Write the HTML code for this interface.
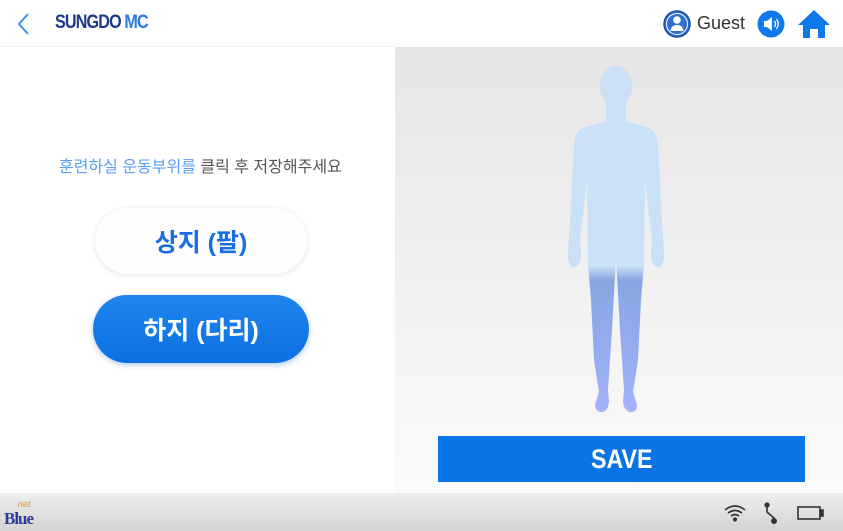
<!DOCTYPE html>
<html><head><meta charset="utf-8"><style>
*{margin:0;padding:0;box-sizing:border-box}
body{width:843px;height:531px;overflow:hidden;background:#fff;position:relative;font-family:"Liberation Sans","Noto Sans CJK KR",sans-serif}
.abs{position:absolute}
.right{left:395px;top:47px;width:448px;height:446px;background:linear-gradient(#e5e5e5,#fbfbfb)}
.bottom{left:0;top:493px;width:843px;height:38px;background:linear-gradient(#eeeeee,#d4d4d4)}
.btn{border-radius:34px;display:flex;align-items:center;justify-content:center;font-weight:bold;font-size:25px}
</style></head><body>
<svg class="abs" style="left:14px;top:12px" width="18" height="24"><path d="M14 2 L5 12 L14 22" stroke="#3d8fe8" stroke-width="2" fill="none"/></svg>
<div class="abs" style="left:55px;top:12px;font-size:19px;font-weight:bold;color:#1d3a8a;letter-spacing:-1px;transform:scaleX(.85);transform-origin:left">SUNGDO <span style="color:#2a7ae0">MC</span></div>
<svg class="abs" style="left:662px;top:9px" width="30" height="30"><circle cx="15" cy="15" r="13" fill="#2f6fd0" stroke="#1c4fa8" stroke-width="1.5"/><circle cx="15" cy="15" r="10.5" fill="none" stroke="#fff" stroke-width="1"/><circle cx="15" cy="11" r="3.8" fill="#fff"/><path d="M8.5 22 Q9 16 15 16 Q21 16 21.5 22Z" fill="#fff"/></svg>
<div class="abs" style="left:697px;top:13px;font-size:18px;color:#333">Guest</div>
<svg class="abs" style="left:756px;top:9px" width="30" height="30"><circle cx="15" cy="15" r="13.5" fill="#0d7ae8"/><path d="M8 12 h3 l5-4 v14 l-5-4 h-3z" fill="#fff"/><path d="M18.5 12 q2 3 0 6 M20.5 10 q3.5 5 0 10" stroke="#fff" stroke-width="1.3" fill="none"/></svg>
<svg class="abs" style="left:797px;top:8px" width="34" height="32"><path d="M17 2 L33 17 H28 V30 H21 V21 H13 V30 H6 V17 H1Z" fill="#0d7ae8"/></svg>
<div class="abs" style="left:0;top:46px;width:395px;height:1px;background:#f3f3f3"></div>
<div class="abs right"></div>
<div class="abs" style="left:59px;top:153px;font-size:16px;color:#555"><span style="color:#5b9ef0">훈련하실 운동부위를</span> 클릭 후 저장해주세요</div>
<div class="abs btn" style="left:95px;top:208px;width:212px;height:66px;background:#fdfdfd;color:#1a6fe0;box-shadow:0 1px 6px rgba(0,0,0,.12)">상지 (팔)</div>
<div class="abs btn" style="left:93px;top:295px;width:216px;height:68px;background:linear-gradient(#1f85ee,#0c6fe0);color:#fff;box-shadow:0 2px 6px rgba(0,80,200,.3)">하지 (다리)</div>
<svg class="abs" style="left:0;top:0" width="843" height="531">
<defs><linearGradient id="g" gradientUnits="userSpaceOnUse" x1="0" y1="60" x2="0" y2="415"><stop offset="0" stop-color="#c9e0f7"/><stop offset="0.58" stop-color="#c9e0f7"/><stop offset="0.62" stop-color="#87a6e3"/><stop offset="1" stop-color="#a4b2fc"/></linearGradient></defs>
<ellipse cx="616" cy="86" rx="16" ry="20" fill="url(#g)"/>
<path d="M606 100 L606 121 L583 128 Q575 132 574 145 L571 200 L568 255 Q568 266 574 267 Q581 267 581 255 L580 240 L587 180 L588 265 L591 300 L594 360 L599 392 L595 405 Q596 413 603 412 Q609 410 609 400 L608 390 L612 330 L616 258 L620 330 L624 390 L623 400 Q623 410 630 412 Q637 413 637 405 L633 392 L638 360 L641 300 L644 265 L645 180 L652 240 L651 255 Q651 267 658 267 Q664 266 664 255 L661 200 L658 145 Q657 132 649 128 L626 121 L626 100Z" fill="url(#g)"/>
</svg>
<div class="abs" style="left:438px;top:436px;width:367px;height:46px;background:#0a74e6;display:flex;align-items:center;justify-content:center"><span style="color:#fff;font-weight:bold;font-size:27px;display:inline-block;transform:scaleX(.86)">SAVE</span></div>
<div class="abs bottom"></div>
<div class="abs" style="left:4px;top:509px;font-family:'Liberation Serif',serif;font-weight:bold;font-size:17px;color:#2a3a9a;letter-spacing:-1px">Blue</div>
<div class="abs" style="left:18px;top:499px;font-size:9px;color:#e8902a;font-style:italic">net</div>
<svg class="abs" style="left:722px;top:501px" width="110" height="24"><g stroke="#333" stroke-width="1.6" fill="none"><path d="M3 9 q10-8 20 0 M6 12 q7-5 14 0 M9 15 q4-3 8 0"/><circle cx="13" cy="18.5" r="1.3" fill="#333"/><path d="M45 4 v7 l7 6 v4"/><circle cx="45" cy="4" r="1.8" fill="#333"/><circle cx="52" cy="20" r="2.2" fill="#333"/><rect x="76" y="6" width="22" height="12"/><rect x="98" y="9" width="3" height="6" fill="#333"/></g></svg>
</body></html>
